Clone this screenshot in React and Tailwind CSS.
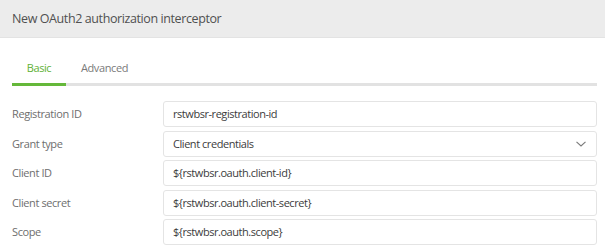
import React from "react";

const rows = [
  { label: "Registration ID", value: "rstwbsr-registration-id" },
  { label: "Grant type", value: "Client credentials", select: true },
  { label: "Client ID", value: "${rstwbsr.oauth.client-id}" },
  { label: "Client secret", value: "${rstwbsr.oauth.client-secret}" },
  { label: "Scope", value: "${rstwbsr.oauth.scope}" },
];

export default function App() {
  return (
    <div
      className="w-[605px] h-[248px] bg-white overflow-hidden"
      style={{ fontFamily: '"Open Sans", "Noto Sans", sans-serif' }}
    >
      <div className="h-[38px] bg-[#ececec] border-b border-[#e3e3e3] flex items-center pl-3">
        <span className="text-[12.5px] leading-[18px] tracking-[-0.4px] text-[#505050]">
          New OAuth2 authorization interceptor
        </span>
      </div>
      <div className="pl-3 pr-[8px]">
        <div className="flex border-b-[3px] border-[#e2e2e2]">
          <div className="w-[54px] -mb-[3px] border-b-[3px] border-[#65b83a] flex justify-center pt-[22px] pb-[7px]">
            <span className="text-[11px] leading-[16px] tracking-[-0.4px] text-[#5fb134]">Basic</span>
          </div>
          <div className="w-[77px] flex justify-center pt-[22px] pb-[7px]">
            <span className="text-[11px] leading-[16px] tracking-[-0.4px] text-[#7a7a7a]">Advanced</span>
          </div>
        </div>
        <div className="mt-[15px] flex flex-col gap-[3.5px]">
          {rows.map((r) => (
            <div key={r.label} className="flex items-center">
              <div className="w-[151px] text-[11px] leading-[16px] tracking-[-0.4px] text-[#6e6e6e]">
                {r.label}
              </div>
              <div className="flex-1 h-[26px] border border-[#e4e4e4] rounded-[3px] flex items-center pl-[9px] pr-[10px]">
                <span className="flex-1 text-[11px] leading-[16px] tracking-[-0.45px] text-[#3c3c3c]">
                  {r.value}
                </span>
                {r.select && (
                  <svg width="10" height="6" viewBox="0 0 10 6">
                    <path d="M0.5 0.8 L5 5 L9.5 0.8" fill="none" stroke="#7a7a7a" strokeWidth="1.1" />
                  </svg>
                )}
              </div>
            </div>
          ))}
        </div>
      </div>
    </div>
  );
}
